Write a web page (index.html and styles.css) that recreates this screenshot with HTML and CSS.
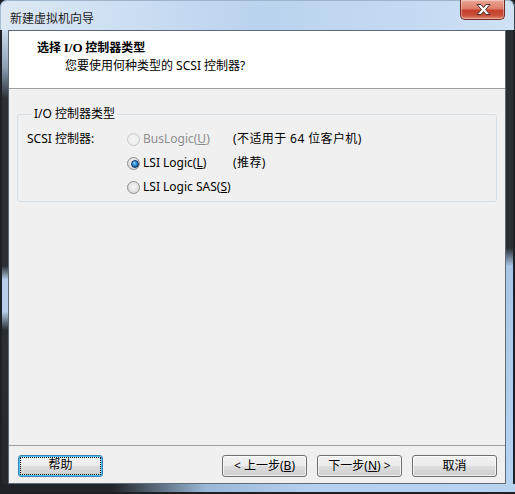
FILE: index.html
```html
<!DOCTYPE html>
<html>
<head>
<meta charset="utf-8">
<link rel="stylesheet" href="styles.css">
</head>
<body>
<div class="window">
  <div class="titlebar">
    <span class="title">新建虚拟机向导</span>
    <div class="close">
      <svg width="45" height="19" viewBox="0 0 45 19">
        <path d="M16 4.5 L20 4.5 L22.5 7.6 L25 4.5 L29 4.5 L24.6 9.6 L29 14.6 L25 14.6 L22.5 11.6 L20 14.6 L16 14.6 L20.4 9.6 Z" fill="#fff" stroke="#4a2a26" stroke-width="1" stroke-linejoin="round"/>
      </svg>
    </div>
  </div>
  <div class="mid">
    <div class="frame-l"></div>
    <div class="client">
      <div class="header">
        <div class="h-title">选择 <span class="serif">I/O</span> 控制器类型</div>
        <div class="h-sub">您要使用何种类型的 SCSI 控制器?</div>
      </div>
      <div class="body">
        <fieldset class="group">
          <legend>I/O 控制器类型</legend>
          <div class="grid">
            <div class="lbl">SCSI 控制器:</div>
            <div class="opt disabled"><span class="radio"></span><span>BusLogic(<u>U</u>)</span></div>
            <div class="note">(不适用于 64 位客户机)</div>
            <div></div>
            <div class="opt"><span class="radio checked"></span><span>LSI Logic(<u>L</u>)</span></div>
            <div class="note">(推荐)</div>
            <div></div>
            <div class="opt"><span class="radio"></span><span>LSI Logic SAS(<u>S</u>)</span></div>
            <div></div>
          </div>
        </fieldset>
      </div>
      <div class="footer">
        <button class="btn focus"><span class="focus-ring">帮助</span></button>
        <div class="spacer"></div>
        <button class="btn">&lt; 上一步(<u>B</u>)</button>
        <button class="btn">下一步(<u>N</u>) &gt;</button>
        <button class="btn">取消</button>
      </div>
    </div>
    <div class="frame-r"></div>
  </div>
  <div class="frame-b"></div>
</div>
</body>
</html>
```
FILE: styles.css
```css
* { box-sizing: border-box; }
html, body { margin: 0; padding: 0; }
body {
  width: 515px;
  height: 494px;
  background: #1e2226;
  font-family: "Noto Sans", "Noto Sans CJK SC", sans-serif;
  font-size: 12px;
  color: #000;
  overflow: hidden;
}
.window {
  width: 515px;
  height: 494px;
  display: flex;
  flex-direction: column;
  border-radius: 7px 7px 0 0;
  overflow: hidden;
  background: #bcd5ef;
}
.titlebar {
  height: 30px;
  position: relative;
  display: flex;
  align-items: center;
  padding-left: 9px;
  background: linear-gradient(90deg, #dde8f4 0%, #cfe0f3 20%, #bad3ee 50%, #c3daf2 80%, #cfe2f5 100%);
  border-top: 1px solid #9fb4cb;
  border-left: 1px solid #a8bdd2;
  border-right: 1px solid #3c434a;
  border-radius: 7px 7px 0 0;
}
.title {
  font-family: "Noto Sans CJK SC", sans-serif;
  font-size: 12px;
  color: #1b1b1b;
  line-height: 14px;
  margin-top: 4px;
}
.close {
  position: absolute;
  right: 9px;
  top: -1px;
  width: 45px;
  height: 20px;
  border: 1px solid #6f2b22;
  border-top: none;
  border-radius: 0 0 5px 5px;
  background: linear-gradient(180deg, #e9a797 0%, #dd7d6a 45%, #c7402c 55%, #c9503b 80%, #e08a6f 100%);
  box-shadow: inset 0 0 0 1px rgba(255,255,255,0.35);
}
.close svg { display: block; }
.mid {
  flex: 1;
  display: flex;
}
.frame-l {
  width: 8px;
  background: linear-gradient(180deg, #c9dcf0 0%, #8fa4b8 8%, #2b3036 15%, #2b3036 52%, #b7cfea 55%, #b7cfea 62%, #2a2f34 66%, #24282c 100%);
  border-left: 2px solid #1d2024;
}
.frame-r {
  width: 9px;
  background: linear-gradient(180deg, #2a2f34 0%, #2a2f34 48%, #a9c6e6 52%, #b7d3f0 100%);
  border-right: 2px solid #1d2024;
}
.frame-b {
  height: 10px;
  background: linear-gradient(90deg, #1f2327 0%, #22262a 22%, #9ab8d8 40%, #b4d0ee 60%, #b7d3f0 100%);
  border-bottom: 2px solid #1d2024;
}
.client {
  width: 498px;
  display: flex;
  flex-direction: column;
  border: 1px solid #5d6b78;
  background: #f0f0f0;
}
.header {
  height: 58px;
  background: #fff;
  border-bottom: 1px solid #a0a0a0;
  padding-top: 9px;
}
.h-title {
  font-family: "Noto Sans CJK SC", sans-serif;
  font-weight: bold;
  line-height: 14px;
  padding-left: 28px;
}
.serif { font-family: "Liberation Serif", serif; font-size: 13px; }
.h-sub {
  font-family: "Noto Sans", "Noto Sans CJK SC", sans-serif;
  line-height: 14px;
  padding-left: 56px;
  margin-top: 4px;
}
.body {
  flex: 1;
  padding: 18px 8px 0 8px;
}
.group {
  margin: 0;
  padding: 6px 0 3px 9px;
  border: 1px solid #d5dfe5;
  border-radius: 3px;
  height: 95px;
}
.group legend {
  padding: 0 2px;
  margin-left: 5px;
  line-height: 14px;
  font-family: "Noto Sans", "Noto Sans CJK SC", sans-serif;
}
.grid {
  display: grid;
  grid-template-columns: 100px 106px 1fr;
  grid-auto-rows: 24px;
  align-items: center;
}
.lbl, .opt, .note { line-height: 14px; white-space: nowrap; }
.note { letter-spacing: 0.4px; }
.opt {
  display: flex;
  align-items: center;
  gap: 3px;
}
.opt.disabled { color: #8d8d8d; }
.radio {
  width: 13px;
  height: 13px;
  border-radius: 50%;
  border: 1px solid #8f9092;
  background: radial-gradient(circle at 50% 45%, #f7f7f7 0%, #e4e4e4 50%, #cfcfcf 100%);
  position: relative;
  flex: none;
}
.opt.disabled .radio {
  border-color: #c8c8c8;
  background: radial-gradient(circle, #f4f4f4 0%, #ececec 100%);
}
.radio.checked::after {
  content: "";
  position: absolute;
  left: 2.5px;
  top: 2.5px;
  width: 6px;
  height: 6px;
  border-radius: 50%;
  background: radial-gradient(circle at 40% 35%, #8fd6ff 0%, #2a8ad4 45%, #0b3d7a 100%);
  border: 0.5px solid #10325e;
}
.footer {
  height: 38px;
  border-top: 1px solid #a0a0a0;
  display: flex;
  align-items: flex-start;
  padding: 9px 8px 0 9px;
  gap: 10px;
}
.spacer { flex: 1; }
.btn {
  width: 85px;
  height: 22px;
  padding: 0;
  font-family: "Noto Sans", "Noto Sans CJK SC", sans-serif;
  font-size: 12px;
  color: #000;
  border: 1px solid #707070;
  border-radius: 3px;
  background: linear-gradient(180deg, #f2f2f2 0%, #ebebeb 50%, #dddddd 51%, #cfcfcf 100%);
  box-shadow: inset 0 0 0 1px rgba(255,255,255,0.7);
  line-height: 18px;
}
.btn.focus {
  border-color: #3c7fb1;
  box-shadow: inset 0 0 0 1px #4fc3f7;
  padding: 2px;
}
.focus-ring {
  display: block;
  height: 16px;
  line-height: 14px;
  outline: 1px dotted #000;
  border: none;
  margin: 0;
}
```
